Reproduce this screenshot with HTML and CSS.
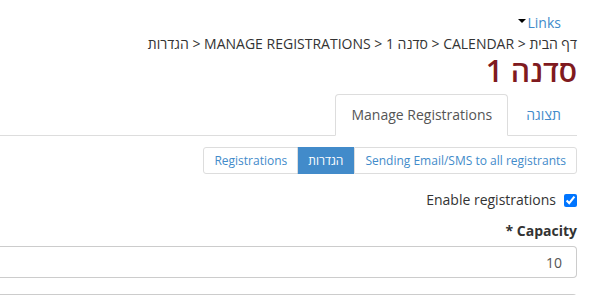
FILE: index.html
```html
<!DOCTYPE html>
<html lang="he" dir="rtl">
<head>
  <meta charset="UTF-8" />
  <title>סדנה 1</title>
  <link rel="stylesheet" href="styles.css">
</head>
<body>
  <div class="page">
    <div class="links-row">
      <a class="links" href="#">Links<span class="caret"></span></a>
    </div>

    <div class="breadcrumb">
      <a href="#">דף הבית</a> &lt; <a href="#">CALENDAR</a> &lt; <a href="#">סדנה 1</a> &lt; <a href="#">MANAGE REGISTRATIONS</a> &lt; <span>הגדרות</span>
    </div>

    <h1 class="title">סדנה 1</h1>

    <ul class="tabs">
      <li><a href="#">תצוגה</a></li>
      <li class="active"><a href="#">Manage Registrations</a></li>
    </ul>

    <div class="btn-row">
      <div class="btn-group">
        <a class="btn" href="#">Sending Email/SMS to all registrants</a>
        <a class="btn active" href="#">הגדרות</a>
        <a class="btn" href="#">Registrations</a>
      </div>
    </div>

    <form class="settings">
      <label class="check-row">
        <input type="checkbox" checked>
        <span>Enable registrations</span>
      </label>

      <div class="field">
        <label class="field-label"><span dir="ltr">* Capacity</span></label>
        <input class="text-input" type="text" value="10">
      </div>

      <div class="field next">
        <input class="text-input" type="text" value="">
      </div>
    </form>
  </div>
</body>
</html>
```

FILE: styles.css
```css
body {
  margin: 0;
  font-family: "Open Sans", "DejaVu Sans", sans-serif;
  font-size: 14px;
  color: #333;
  background: #fff;
}
a {
  color: #428bca;
  text-decoration: none;
}
.page {
  padding: 13px 30px 0 0;
}
.links-row {
  height: 20px;
  line-height: 20px;
  padding-right: 16px;
}
.links {
  font-size: 14px;
}
.caret {
  display: inline-block;
  width: 0;
  height: 0;
  margin-right: 2px;
  vertical-align: 5px;
  border-top: 4px solid #000;
  border-left: 4px solid transparent;
  border-right: 4px solid transparent;
}
.breadcrumb {
  margin-top: 1px;
  font-size: 14px;
  line-height: 20px;
  color: #333;
}
.breadcrumb a {
  color: #333;
}
.title {
  margin: 0;
  font-size: 30px;
  font-weight: 600;
  line-height: 33px;
  color: #7f1a20;
}
.tabs {
  display: flex;
  list-style: none;
  margin: 7px 0 0;
  padding: 0;
  border-bottom: 1px solid #ddd;
}
.tabs li {
  margin-bottom: -1px;
  margin-left: 2px;
}
.tabs a {
  display: block;
  padding: 10px 15px;
  line-height: 20px;
  border: 1px solid transparent;
  border-radius: 4px 4px 0 0;
}
.tabs .active a {
  color: #555;
  background: #fff;
  border-color: #ddd #ddd transparent;
}
.btn-row {
  display: flex;
  margin-top: 11px;
}
.btn-group {
  display: flex;
}
.btn {
  padding: 4px 10px;
  font-size: 12px;
  line-height: 17px;
  border: 1px solid #ddd;
  margin-left: -1px;
}
.btn:first-child {
  margin-left: 0;
  border-radius: 0 3px 3px 0;
}
.btn:last-child {
  border-radius: 3px 0 0 3px;
}
.btn.active {
  background: #428bca;
  border-color: #428bca;
  color: #fff;
}
.settings {
  margin-top: 16px;
}
.check-row {
  display: flex;
  align-items: center;
  gap: 8px;
  line-height: 20px;
}
.check-row input {
  margin: 0;
  width: 13px;
  height: 13px;
}
.field {
  margin-top: 11px;
}
.field.next {
  margin-top: 16px;
}
.field-label {
  display: block;
  font-weight: 700;
  line-height: 20px;
  margin-bottom: 5px;
}
.text-input {
  box-sizing: border-box;
  display: block;
  width: 100%;
  height: 32px;
  padding: 6px 14px;
  font-family: inherit;
  font-size: 14px;
  color: #555;
  border: 1px solid #ccc;
  border-radius: 4px;
  border-top-left-radius: 0;
  border-bottom-left-radius: 0;
  border-left: none;
}
```
